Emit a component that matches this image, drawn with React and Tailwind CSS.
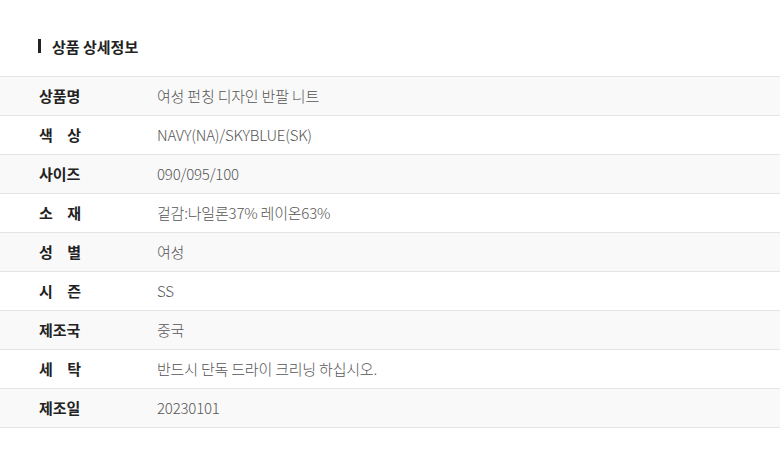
import React from "react";

const rows = [
  ["상품명", "여성 펀칭 디자인 반팔 니트", false],
  ["색 상", "NAVY(NA)/SKYBLUE(SK)", true],
  ["사이즈", "090/095/100", false],
  ["소 재", "겉감:나일론37% 레이온63%", true],
  ["성 별", "여성", true],
  ["시 즌", "SS", true],
  ["제조국", "중국", false],
  ["세 탁", "반드시 단독 드라이 크리닝 하십시오.", true],
  ["제조일", "20230101", false],
];

export default function App() {
  return (
    <div
      className="w-[780px] h-[466px] bg-white"
      style={{ fontFamily: '"Noto Sans CJK KR", "Noto Sans", sans-serif' }}
    >
      <div className="h-[76px] flex items-center pl-[38px] pt-[16px]">
        <div className="w-[3px] h-[14px] bg-[#222]" />
        <div className="ml-[11px] text-[15px] font-bold text-[#222] leading-none">상품 상세정보</div>
      </div>
      <div className="border-t border-[#e5e5e5]">
        {rows.map(([label, value, split], i) => (
          <div
            key={i}
            className={`h-[39px] flex items-center border-b border-[#e5e5e5] ${i % 2 === 0 ? "bg-[#f9f9f9]" : "bg-white"}`}
          >
            <div className="w-[157px] pl-[39px] flex">
              {split ? (
                <div className="w-[42px] flex justify-between text-[15px] font-bold text-[#222]">
                  {label.split(" ").map((c, j) => (
                    <span key={j}>{c}</span>
                  ))}
                </div>
              ) : (
                <div className="text-[15px] font-bold text-[#222]">{label}</div>
              )}
            </div>
            <div className="text-[15px] text-[#555] font-light tracking-[-0.2px]">{value}</div>
          </div>
        ))}
      </div>
    </div>
  );
}
